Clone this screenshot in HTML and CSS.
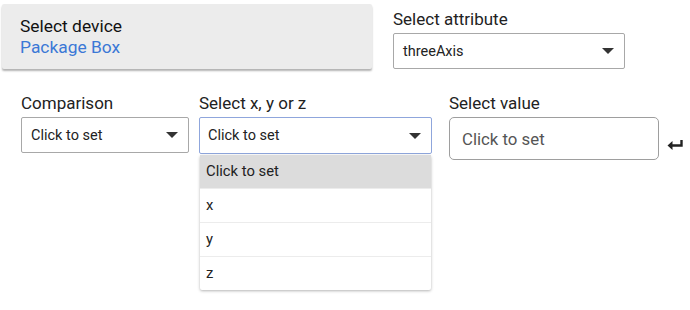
FILE: index.html
```html
<html lang="en">
    <head>
        <title>Rule condition</title>
        <link rel="stylesheet" href="styles.css">
    </head>
    <body>
        <div class="top-row">
            <div class="device-card">
                <div class="device-title">Select device</div>
                <div class="device-name">Package Box</div>
            </div>
            <div class="field attribute">
                <label>Select attribute</label>
                <div class="select">
                    <span>threeAxis</span>
                    <span class="caret"></span>
                </div>
            </div>
        </div>
        <div class="bottom-row">
            <div class="field comparison">
                <label>Comparison</label>
                <div class="select">
                    <span>Click to set</span>
                    <span class="caret"></span>
                </div>
            </div>
            <div class="field axis">
                <label>Select x, y or z</label>
                <div class="select focused">
                    <span>Click to set</span>
                    <span class="caret"></span>
                </div>
                <ul class="menu">
                    <li class="active">Click to set</li>
                    <li>x</li>
                    <li>y</li>
                    <li>z</li>
                </ul>
            </div>
            <div class="field value">
                <label>Select value</label>
                <div class="value-input">Click to set</div>
            </div>
            <svg class="enter" width="17" height="12" viewBox="0 0 17 12">
                <path d="M14.5 1 V6.5 H4" fill="none" stroke="#222" stroke-width="2.4"/>
                <path d="M0.5 6.5 L5.5 2 V11 Z" fill="#222"/>
            </svg>
        </div>
    </body>
</html>
```

FILE: styles.css
```css
body {
    margin: 0;
    font-family: Roboto, "Noto Sans", sans-serif;
    color: #212121;
    background: #fff;
}

.top-row {
    display: flex;
    align-items: flex-start;
    padding: 4px 0 0 2px;
}
.device-card {
    width: 352px;
    height: 65px;
    padding: 0 0 0 18px;
    background-color: #ececec;
    border-radius: 2px;
    box-shadow: 0 2px 2px rgba(0, 0, 0, 0.3);
    display: flex;
    flex-direction: column;
    justify-content: center;
}
.device-title {
    font-size: 17.4px;
    line-height: 21px;
    color: #111;
}
.device-name {
    font-size: 17.4px;
    line-height: 21px;
    color: #3b78d6;
}

.field {
    display: flex;
    flex-direction: column;
    position: relative;
}
.field label {
    font-size: 17px;
    line-height: 21px;
    color: #222;
    margin-bottom: 3px;
}
.attribute {
    margin: 5px 0 0 21px;
}
.attribute .select {
    width: 232px;
    height: 36px;
}

.select {
    box-sizing: border-box;
    border: 1px solid #a8a8a8;
    border-radius: 2px;
    display: flex;
    align-items: center;
    justify-content: space-between;
    padding: 0 10px 0 9px;
    font-size: 14.5px;
    color: #222;
}
.select.focused {
    border-color: #8fa6dc;
}
.caret {
    width: 0;
    height: 0;
    border-left: 6px solid transparent;
    border-right: 6px solid transparent;
    border-top: 6px solid #333;
}

.bottom-row {
    display: flex;
    align-items: flex-start;
    padding: 93px 0 0 21px;
    margin-top: -69px;
}
.comparison .select {
    width: 168px;
    height: 36px;
}
.axis {
    margin-left: 10px;
}
.axis .select {
    width: 233px;
    height: 37px;
    padding-left: 8px;
}
.value {
    margin-left: 17px;
}
.value-input {
    box-sizing: border-box;
    width: 210px;
    height: 43px;
    border: 1px solid #9e9e9e;
    border-radius: 5px;
    padding: 0 12px;
    display: flex;
    align-items: center;
    font-size: 16.8px;
    color: #555;
}
.enter {
    margin: 46px 0 0 8px;
}

.menu {
    position: absolute;
    top: 62px;
    left: 1px;
    width: 231px;
    margin: 0;
    padding: 0;
    list-style: none;
    background: #fff;
    border-radius: 2px;
    box-shadow: 0 1px 3px rgba(0, 0, 0, 0.3);
}
.menu li {
    height: 33px;
    line-height: 33px;
    padding-left: 6px;
    font-size: 14.8px;
    color: #222;
    border-bottom: 1px solid #ececec;
}
.menu li:last-child {
    border-bottom: none;
}
.menu li.active {
    background-color: #dcdcdc;
}
```
